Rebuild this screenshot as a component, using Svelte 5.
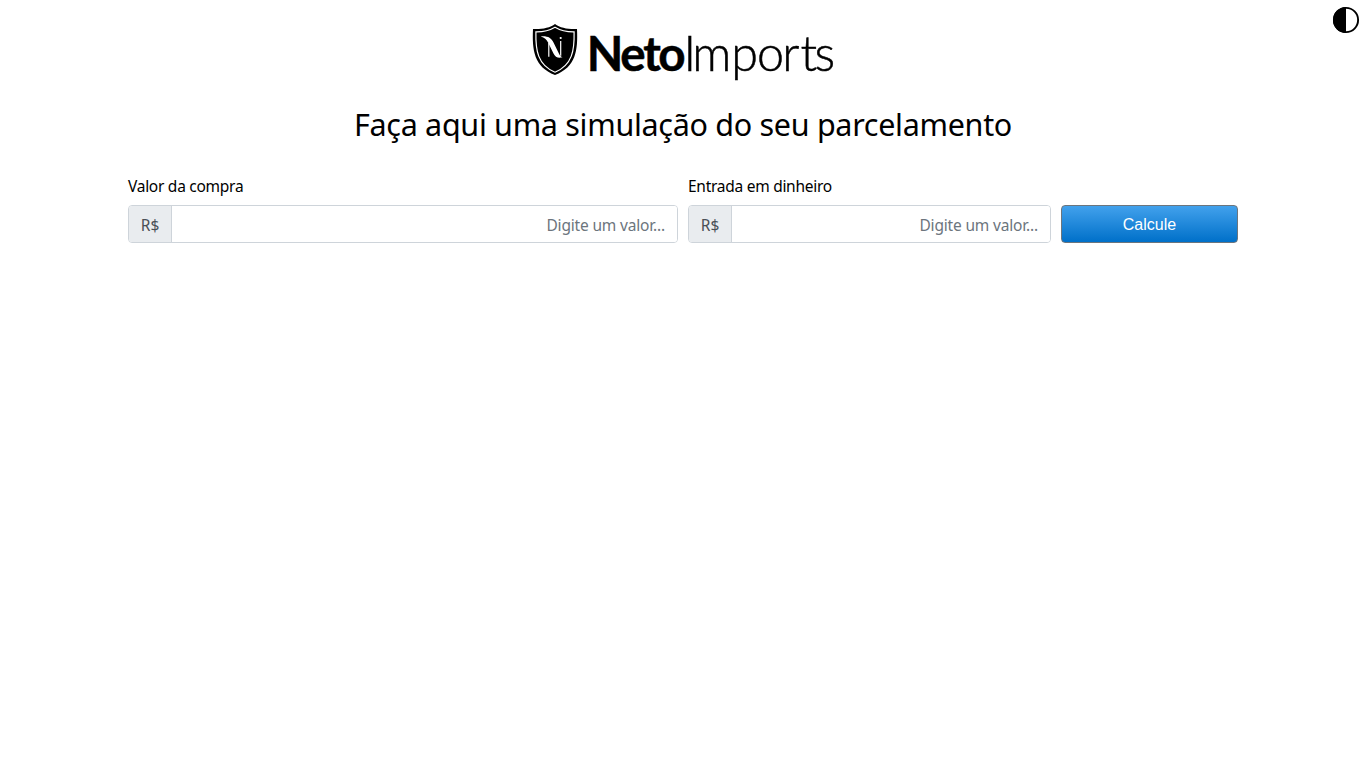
<script>
  let purchase = $state('');
  let deposit = $state('');
</script>

<button class="theme" aria-label="Alternar contraste">
  <svg width="28" height="28" viewBox="0 0 28 28">
    <circle cx="14" cy="14" r="12.1" fill="#fff" stroke="#000" stroke-width="1.9" />
    <path d="M14 1a13 13 0 0 0 0 26z" />
  </svg>
</button>

<main>
  <header>
    <svg class="logo" width="302" height="58" viewBox="0 0 302 58">
      <path d="M23 1C18 5 9 6.500 1 6C0 27 2 44 23 52C44 44 46 27 45 6C37 6.500 28 5 23 1Z" />
      <path d="M23 4.200C17.500 7.500 10 9 3.900 8.900C3.500 27 5.500 42 23 49.200C40.500 42 42.500 27 42.100 8.900C36 9 28.500 7.500 23 4.200Z" fill="none" stroke="#fff" stroke-width="1.200" />
      <path d="M8.800 13.400C15.500 12.800 19.200 14.700 21.500 19.500L27 30.800C27.800 32.500 29 33.700 30.500 34.300C26 35.600 23.300 34 21.500 30.500L16.200 19.800C14.500 16.300 12.500 14.500 8.800 13.400Z" fill="#fff" />
      <path d="M16.800 20V33.800M28.700 18V32.800" stroke="#fff" stroke-width="1.200" />
      <circle cx="28.700" cy="15" r="1.100" fill="#fff" />
      <text y="48"><tspan class="bold" x="54.800 88.300 111.300 126.300">Neto</tspan><tspan class="light" x="151.500 160.300 199.300 225 250.300 268.500 282.500">Imports</tspan></text>
    </svg>
    <h1>Faça aqui uma simulação do seu parcelamento</h1>
  </header>

  <form onsubmit={(event) => event.preventDefault()}>
    <div class="field">
      <label for="purchase">Valor da compra</label>
      <div class="group">
        <span>R$</span>
        <input id="purchase" bind:value={purchase} placeholder="Digite um valor..." />
      </div>
    </div>
    <div class="field">
      <label for="deposit">Entrada em dinheiro</label>
      <div class="group">
        <span>R$</span>
        <input id="deposit" bind:value={deposit} placeholder="Digite um valor..." />
      </div>
    </div>
    <button class="submit">Calcule</button>
  </form>
</main>

<style>
  :global(body) {
    margin: 0;
    background: #fff;
    color: #000;
    font-family: "Noto Sans", sans-serif;
  }
  .theme {
    position: absolute;
    top: 6px;
    right: 5px;
    width: 28px;
    height: 28px;
    padding: 0;
    border: 0;
    background: none;
  }
  svg { display: block; }
  main {
    width: 1110px;
    margin: 0 auto;
    padding: 23px 0 0 1px;
  }
  header {
    display: flex;
    flex-direction: column;
    align-items: center;
  }
  .logo { overflow: visible; }
  .logo text { font-family: Lato, sans-serif; font-size: 48px; }
  .logo .bold { font-size: 47.500px; font-weight: 700; stroke: #000; stroke-width: .5px; }
  .logo .light { font-size: 48.500px; font-weight: 300; stroke: #000; stroke-width: .5px; }
  h1 {
    margin: 22px 0 0;
    font-size: 30.500px;
    line-height: 42px;
    font-weight: 400;
    letter-spacing: -0.300px;
    white-space: nowrap;
  }
  form {
    display: grid;
    grid-template-columns: 550px 363px 177px;
    column-gap: 10px;
    align-items: end;
    margin-top: 29px;
  }
  label {
    display: block;
    height: 24px;
    margin-bottom: 7px;
    font-size: 15.500px;
    line-height: 24px;
    letter-spacing: -0.270px;
  }
  .group {
    display: flex;
    box-sizing: border-box;
    height: 38px;
    border: 1px solid #ced4da;
    border-radius: 4px;
    overflow: hidden;
  }
  .group span {
    flex: none;
    box-sizing: border-box;
    width: 43px;
    padding-top: 1px;
    border-right: 1px solid #ced4da;
    background: #e9ecef;
    color: #495057;
    font-size: 15.500px;
    line-height: 37px;
    text-align: center;
  }
  input {
    flex: 1;
    min-width: 0;
    padding: 2px 12px 0;
    border: 0;
    outline: 0;
    background: #fff;
    color: #495057;
    font: 15.500px "Noto Sans", sans-serif;
    letter-spacing: -0.170px;
    text-align: right;
  }
  input::placeholder { color: #6c757d; opacity: 1; }
  .submit {
    height: 38px;
    padding: 1px 0 0;
    border: 1px solid #6c757d;
    border-radius: 4px;
    background: linear-gradient(#42a1ec, #0070c9);
    color: #fff;
    font: 16px "Liberation Sans", Arial, sans-serif;
  }
</style>
